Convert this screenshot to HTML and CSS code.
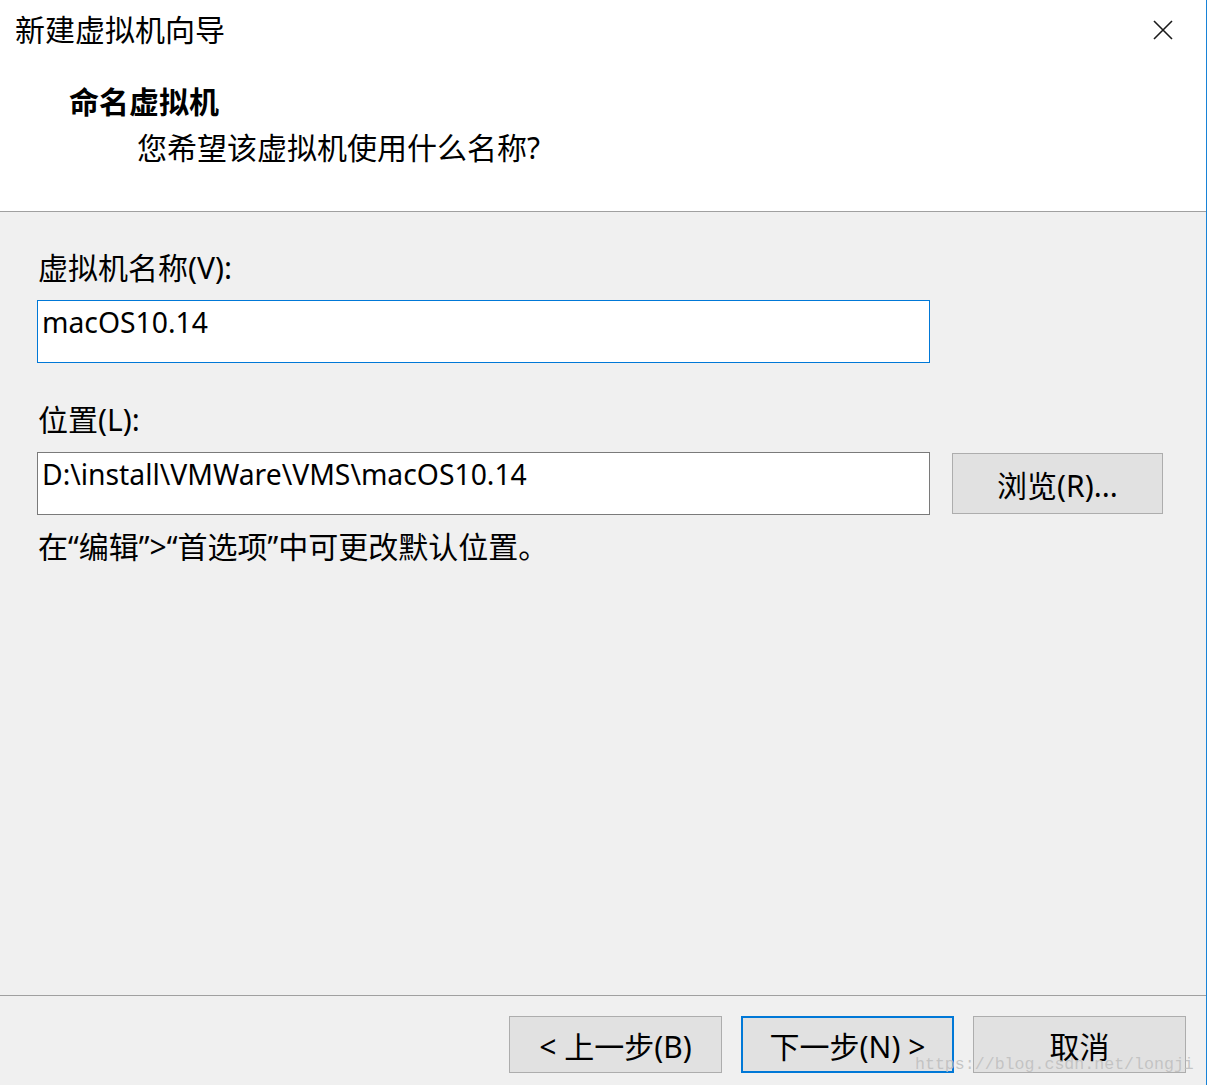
FILE: index.html
```html
<!DOCTYPE html>
<html>
  <head>
    <title>新建虚拟机向导</title>
    <link rel="stylesheet" href="styles.css">
  </head>

  <body>
    <div class="wizard">
      <div class="head">
        <div class="title-row">
          <div class="title">新建虚拟机向导</div>
          <div class="close">
            <svg width="20" height="20" viewBox="0 0 20 20">
              <path d="M1 1 L19 19 M19 1 L1 19" stroke="#1a1a1a" stroke-width="1.6" fill="none"/>
            </svg>
          </div>
        </div>
        <div class="step">命名虚拟机</div>
        <div class="step-desc">您希望该虚拟机使用什么名称?</div>
      </div>

      <div class="content">
        <label class="field-label" for="vm-name">虚拟机名称(V):</label>
        <div class="row">
          <div class="input focused" id="vm-name">macOS10.14</div>
        </div>

        <label class="field-label second" for="vm-path">位置(L):</label>
        <div class="row">
          <div class="input" id="vm-path">D:\install\VMWare\VMS\macOS10.14</div>
          <div class="button browse">浏览(R)...</div>
        </div>

        <div class="hint">在“编辑”&gt;“首选项”中可更改默认位置。</div>
      </div>

      <div class="foot">
        <div class="button">&lt; 上一步(B)</div>
        <div class="button primary">下一步(N) &gt;</div>
        <div class="button">取消</div>
        <div class="watermark">https://blog.csdn.net/longji</div>
      </div>
    </div>
  </body>
</html>
```

FILE: styles.css
```css
body {
  margin: 0;
  background-color: #f0f0f0;
  color: #000;
  font-family: "Noto Sans", "Noto Sans CJK SC", sans-serif;
}

.wizard {
  width: 1206px;
  height: 1085px;
  border-right: 1px solid #1883d7;
  display: flex;
  flex-direction: column;
  position: relative;
}

.head {
  height: 212px;
  box-sizing: border-box;
  background-color: #fff;
  border-bottom: 1px solid #a0a0a0;
}

.title-row {
  display: flex;
  justify-content: space-between;
  align-items: center;
  height: 60px;
  padding: 0 33px 0 15px;
}

.title {
  font-size: 30px;
  line-height: 60px;
}

.close {
  display: flex;
  width: 20px;
  height: 20px;
}

.step {
  font-size: 30px;
  font-weight: bold;
  line-height: 40px;
  margin: 22px 0 0 69px;
}

.step-desc {
  font-size: 30px;
  line-height: 40px;
  margin: 6px 0 0 137px;
}

.content {
  flex: 1;
  padding: 36px 0 0 37px;
}

.field-label {
  display: block;
  font-size: 30px;
  line-height: 40px;
  margin-left: 1px;
  margin-bottom: 12px;
}

.field-label.second {
  margin-top: 37px;
}

.row {
  display: flex;
  align-items: center;
  gap: 22px;
}

.input {
  width: 893px;
  height: 63px;
  box-sizing: border-box;
  background-color: #fff;
  border: 1px solid #7a7a7a;
  padding: 1px 0 0 4px;
  font-size: 28.3px;
  line-height: 40px;
}

.input.focused {
  border-color: #0078d7;
}

.button {
  width: 213px;
  height: 57px;
  box-sizing: border-box;
  background-color: #e1e1e1;
  border: 1px solid #adadad;
  display: flex;
  align-items: center;
  justify-content: center;
  font-size: 30px;
}

.browse {
  width: 211px;
  height: 61px;
}

.hint {
  font-size: 30px;
  line-height: 40px;
  margin: 12px 0 0 1px;
}

.foot {
  height: 90px;
  box-sizing: border-box;
  border-top: 1px solid #a0a0a0;
  display: flex;
  justify-content: flex-end;
  gap: 19px;
  padding: 20px 20px 0 0;
}

.primary {
  border: 2px solid #0078d7;
}

.watermark {
  position: absolute;
  left: 915px;
  top: 1054px;
  font-family: "Liberation Mono", monospace;
  font-size: 16.6px;
  line-height: 22px;
  color: rgba(190, 190, 190, 0.85);
}
```
